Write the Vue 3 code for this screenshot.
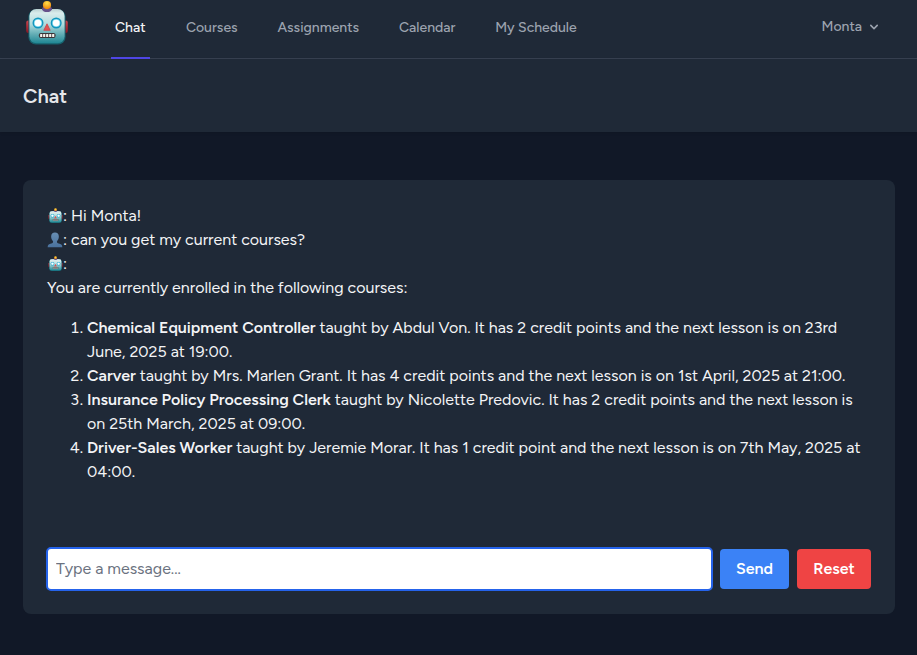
<script setup>
import { h, ref } from 'vue'

const links = ['Chat', 'Courses', 'Assignments', 'Calendar', 'My Schedule']
const current = 'Chat'
const courses = [
  { name: 'Chemical Equipment Controller', info: 'taught by Abdul Von. It has 2 credit points and the next lesson is on 23rd June, 2025 at 19:00.' },
  { name: 'Carver', info: 'taught by Mrs. Marlen Grant. It has 4 credit points and the next lesson is on 1st April, 2025 at 21:00.' },
  { name: 'Insurance Policy Processing Clerk', info: 'taught by Nicolette Predovic. It has 2 credit points and the next lesson is on 25th March, 2025 at 09:00.' },
  { name: 'Driver-Sales Worker', info: 'taught by Jeremie Morar. It has 1 credit point and the next lesson is on 7th May, 2025 at 04:00.' },
]
const message = ref('')

const Robot = () =>
  h('svg', { viewBox: '0 0 44 46', 'aria-hidden': 'true' }, [
    h('defs', null, [
      h('linearGradient', { id: 'robot-face', x1: 0, y1: 0, x2: 0, y2: 1 }, [
        h('stop', { offset: '0', 'stop-color': '#b9cfd0' }),
        h('stop', { offset: '.12', 'stop-color': '#d9ecec' }),
        h('stop', { offset: '.45', 'stop-color': '#b0dbdd' }),
        h('stop', { offset: '.75', 'stop-color': '#5fabb3' }),
        h('stop', { offset: '1', 'stop-color': '#1f8794' }),
      ]),
      h('radialGradient', { id: 'robot-bulb', cx: 0.5, cy: 0.25, r: 0.75 }, [
        h('stop', { offset: '0', 'stop-color': '#ffe04a' }),
        h('stop', { offset: '1', 'stop-color': '#ee8108' }),
      ]),
      h('linearGradient', { id: 'robot-ear', x1: 0, y1: 0, x2: 0, y2: 1 }, [
        h('stop', { offset: '0', 'stop-color': '#c8434c' }),
        h('stop', { offset: '1', 'stop-color': '#8d1522' }),
      ]),
    ]),
    h('rect', { x: 1.2, y: 20.5, width: 5, height: 12.5, rx: 2, fill: 'url(#robot-ear)' }),
    h('rect', { x: 37.8, y: 20.5, width: 5, height: 12.5, rx: 2, fill: 'url(#robot-ear)' }),
    h('rect', { x: 3.4, y: 9.3, width: 37.2, height: 35.2, rx: 7.5, fill: '#17616d' }),
    h('rect', { x: 4.4, y: 9, width: 35.2, height: 34.2, rx: 7, fill: 'url(#robot-face)' }),
    h('path', { d: 'M17 9.200c.2-2.200 2-3.200 5-3.200s4.800 1 5 3.200c-.8 2-2.600 2.800-5 2.800s-4.200-.8-5-2.800z', fill: '#66518a' }),
    h('circle', { cx: 22, cy: 5.1, r: 4.1, fill: 'url(#robot-bulb)' }),
    ...[13, 31.2].flatMap((cx) => [
      h('circle', { cx, cy: 23, r: 5.5, fill: '#1295bd' }),
      h('circle', { cx, cy: 23, r: 4.1, fill: '#7fdcf2' }),
      h('circle', { cx, cy: 23, r: 3.3, fill: '#ffffff' }),
    ]),
    h('path', { d: 'M22 23.800l3.200 6.500h-6.400z', fill: '#e25353', stroke: '#c94448', 'stroke-width': 0.8, 'stroke-linejoin': 'round' }),
    h('rect', { x: 13.8, y: 32.9, width: 16.8, height: 5, rx: 2.2, fill: '#3c3437' }),
    ...[15.1, 18.1, 21.1, 24.1, 27.1].map((x) =>
      h('rect', { x, y: 33.9, width: 2.2, height: 3, rx: 0.5, fill: '#f4f3ee' })
    ),
  ])

const Person = () =>
  h('svg', { viewBox: '0 0 16 17', 'aria-hidden': 'true' }, [
    h('defs', null, [
      h('linearGradient', { id: 'person-fill', x1: 0, y1: 0, x2: 0, y2: 1 }, [
        h('stop', { offset: '0', 'stop-color': '#678eb3' }),
        h('stop', { offset: '1', 'stop-color': '#4a729e' }),
      ]),
    ]),
    h('path', {
      fill: 'url(#person-fill)',
      d: 'M8 .6c2.500 0 4.100 1.700 4.100 4.200 0 2-.9 3.900-2 4.900v1.300c.2.900 1.200 1.200 2.800 1.600 1.800.5 2.800 1.400 2.900 3.600H.2c.1-2.200 1.100-3.100 2.900-3.600 1.600-.4 2.600-.7 2.800-1.600V9.700c-1.100-1-2-2.900-2-4.900C3.900 2.300 5.500.6 8 .6z',
    }),
  ])
</script>

<template>
  <div class="page">
    <nav class="topbar">
      <a class="logo" href="#"><Robot /></a>
      <div class="links">
        <a v-for="l in links" :key="l" href="#" class="link" :class="{ 'is-active': l === current }">{{ l }}</a>
      </div>
      <button class="account" type="button">
        <span>Monta</span>
        <svg viewBox="0 0 20 20" fill="currentColor" aria-hidden="true">
          <path fill-rule="evenodd" clip-rule="evenodd" d="M5.293 7.293a1 1 0 011.414 0L10 10.586l3.293-3.293a1 1 0 111.414 1.414l-4 4a1 1 0 01-1.414 0l-4-4a1 1 0 010-1.414z" />
        </svg>
      </button>
    </nav>

    <header class="heading"><h2>Chat</h2></header>

    <main class="main">
      <section class="card">
        <div class="log">
          <p class="line"><Robot class="emoji robot" />: Hi Monta!</p>
          <p class="line"><Person class="emoji" />: can you get my current courses?</p>
          <p class="line"><Robot class="emoji robot" />:</p>
          <p class="line">You are currently enrolled in the following courses:</p>
          <ol class="course-list">
            <li v-for="c in courses" :key="c.name"><strong>{{ c.name }}</strong> {{ c.info }}</li>
          </ol>
        </div>
        <form class="composer" @submit.prevent>
          <input v-model="message" type="text" placeholder="Type a message...">
          <button class="btn send" type="submit">Send</button>
          <button class="btn reset" type="button">Reset</button>
        </form>
      </section>
    </main>
  </div>
</template>

<style>
body { margin: 0; background: #111827; }
</style>

<style scoped>
* { box-sizing: border-box; }
.page {
  min-height: 655px;
  background: #111827;
  color: #f3f4f6;
  font: 16px/24px Figtree, Lato, "Liberation Sans", sans-serif;
}
.topbar {
  display: flex;
  height: 59px;
  padding: 0 35px 0 25px;
  background: #1f2937;
  border-bottom: 1px solid #374151;
}
.logo { width: 44px; height: 46px; }
.logo svg { display: block; width: 44px; height: 46px; }
.links { display: flex; margin-left: 42px; gap: 31.9px; height: 59px; }
.link {
  display: flex;
  align-items: center;
  padding: 0 4px 2px;
  border-bottom: 2px solid transparent;
  font-size: 14px;
  font-weight: 500;
  line-height: 20px;
  color: #9ca3af;
  text-decoration: none;
  white-space: nowrap;
}
.link.is-active { width: 39px; color: #f3f4f6; border-color: #4f46e5; }
.account {
  display: flex;
  align-items: center;
  gap: 4px;
  height: 54px;
  margin-left: auto;
  padding: 0;
  border: 0;
  background: none;
  color: #9ca3af;
  font: 500 14px/20px Figtree, Lato, "Liberation Sans", sans-serif;
}
.account svg { width: 16px; height: 16px; }
.heading {
  height: 73px;
  padding: 23px;
  background: #1f2937;
  box-shadow: 0 1px 3px rgba(0, 0, 0, .1);
}
.heading h2 { margin: 0; font-size: 20px; line-height: 28px; font-weight: 600; color: #e5e7eb; }
.main { padding: 48px 22px 41px 23px; }
.card {
  display: flex;
  flex-direction: column;
  justify-content: space-between;
  height: 434px;
  padding: 24px 24px 23px 23px;
  border-radius: 8px;
  background: #1f2937;
}
.log { padding-left: 1px; }
.line { display: flex; height: 24px; margin: 0; white-space: pre; }
.emoji { width: 16px; height: 16px; margin-top: 3.5px; }
.emoji.robot { width: 15px; height: 15.5px; margin: 3.5px .5px 0; }
.course-list { margin: 16px 0 0; padding-left: 40px; }
strong { font-weight: 600; }
.composer { display: flex; align-items: center; gap: 8px; }
.composer input {
  flex: 1;
  min-width: 0;
  height: 44px;
  margin-right: -1px;
  padding: 0 8px 1px;
  border: 2px solid #2563eb;
  border-radius: 5px;
  background: #fff;
  color: #111827;
  font: inherit;
  outline: 0;
}
.composer input::placeholder { color: #6b7280; opacity: 1; }
.btn {
  height: 40px;
  padding: 0;
  border: 0;
  border-radius: 4px;
  color: #fff;
  font: 600 16px/24px Figtree, Lato, "Liberation Sans", sans-serif;
}
.send { width: 69px; background: #3b82f6; }
.reset { width: 74px; background: #ef4444; }
</style>
